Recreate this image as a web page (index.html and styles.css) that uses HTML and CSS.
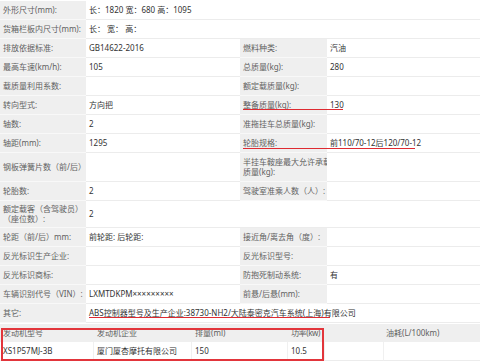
FILE: index.html
```html
<!DOCTYPE html>
<html lang="zh-CN">
<head>
<meta charset="utf-8">
<link rel="stylesheet" href="styles.css">
</head>
<body>
<div class="spec">
  <div class="k">外形尺寸(mm):</div>
  <div class="v span3">长：1820 宽：680 高：1095</div>

  <div class="k">货箱栏板内尺寸(mm):</div>
  <div class="v span3">长： 宽： 高：</div>

  <div class="k">排放依据标准:</div>
  <div class="v">GB14622-2016</div>
  <div class="k">燃料种类:</div>
  <div class="v">汽油</div>

  <div class="k">最高车速(km/h):</div>
  <div class="v">105</div>
  <div class="k">总质量(kg):</div>
  <div class="v">280</div>

  <div class="k">载质量利用系数:</div>
  <div class="v"></div>
  <div class="k">额定载质量(kg):</div>
  <div class="v"></div>

  <div class="k">转向型式:</div>
  <div class="v">方向把</div>
  <div class="k">整备质量(kg):</div>
  <div class="v">130</div>

  <div class="k">轴数:</div>
  <div class="v">2</div>
  <div class="k">准拖挂车总质量(kg):</div>
  <div class="v"></div>

  <div class="k">轴距(mm):</div>
  <div class="v">1295</div>
  <div class="k">轮胎规格:</div>
  <div class="v">前110/70-12后120/70-12</div>

  <div class="k">钢板弹簧片数（前/后）:</div>
  <div class="v"></div>
  <div class="k">半挂车鞍座最大允许承载<br>质量(kg):</div>
  <div class="v"></div>

  <div class="k">轮胎数:</div>
  <div class="v">2</div>
  <div class="k">驾驶室准乘人数（人）:</div>
  <div class="v"></div>

  <div class="k">额定载客（含驾驶员）<br>（座位数）:</div>
  <div class="v span3">2</div>

  <div class="k">轮距（前/后）mm:</div>
  <div class="v">前轮距: 后轮距:</div>
  <div class="k">接近角/离去角（度）:</div>
  <div class="v"></div>

  <div class="k">反光标识生产企业:</div>
  <div class="v"></div>
  <div class="k">反光标识型号:</div>
  <div class="v"></div>

  <div class="k">反光标识商标:</div>
  <div class="v"></div>
  <div class="k">防抱死制动系统:</div>
  <div class="v">有</div>

  <div class="k">车辆识别代号（VIN）:</div>
  <div class="v">LXMTDKPM×××××××××</div>
  <div class="k">前悬/后悬(mm):</div>
  <div class="v"></div>

  <div class="k">其它:</div>
  <div class="v span3">ABS控制器型号及生产企业:38730-NH2/大陆泰密克汽车系统(上海)有限公司</div>

  <span class="mark mark-a"></span>
  <span class="mark mark-b"></span>
  <span class="mark mark-c"></span>
</div>

<div class="engine">
  <div class="eng-head">
    <div class="h">发动机型号</div>
    <div class="h">发动机企业</div>
    <div class="h">排量(ml)</div>
    <div class="h tight">功率(kw)</div>
    <div class="h">油耗(L/100km)</div>
  </div>
  <div class="eng-row">
    <div class="d">XS1P57MJ-3B</div>
    <div class="d">厦门厦杏摩托有限公司</div>
    <div class="d">150</div>
    <div class="d">10.5</div>
    <div class="d"></div>
    <div class="d"></div>
  </div>
  <span class="box"></span>
</div>
</body>
</html>
```

FILE: styles.css
```css
html, body {
  margin: 0;
  padding: 0;
  background: #ffffff;
  overflow: hidden;
}

body {
  width: 480px;
  font-family: "Noto Sans", "Noto Sans CJK SC", sans-serif;
  font-size: 8px;
  line-height: 10px;
  color: #333333;
}

.spec {
  position: relative;
  margin-top: 1px;
  display: grid;
  grid-template-columns: 86px 154px 87px 1fr;
  grid-template-rows: repeat(8, 19px) 29px 19px 27px repeat(5, 19px);
}

.k, .v {
  box-sizing: border-box;
  display: flex;
  align-items: center;
  padding: 0 0 0 3px;
  white-space: nowrap;
}

.k {
  background: #efefef;
  color: #616161;
  border-bottom: 1px solid #f8f8f8;
}

.v {
  background: #ffffff;
  color: #333333;
  border-bottom: 1px solid #ececec;
}

.span3 {
  grid-column: span 3;
}

.mark {
  position: absolute;
  height: 1px;
  background: #de2a31;
}

.mark-a { top: 108px; left: 243px; width: 100px; }
.mark-b { top: 147px; left: 243px; width: 172px; }
.mark-c { top: 316px; left: 89px; width: 241px; }

.engine {
  position: relative;
  margin-top: 1px;
}

.eng-head {
  display: grid;
  grid-template-columns: 94px 98px 96px 95px 1fr;
  height: 18px;
  background: #efefef;
  color: #616161;
}

.eng-row {
  display: grid;
  grid-template-columns: 94px 98px 96px 37px 59px 1fr;
  height: 19px;
}

.h, .d {
  box-sizing: border-box;
  display: flex;
  align-items: center;
  padding: 0 0 0 3px;
  white-space: nowrap;
}

.tight {
  letter-spacing: -0.4px;
}

.d {
  color: #333333;
  border-right: 1px solid #f0f0f0;
  border-bottom: 1px solid #ececec;
}

.d:last-child {
  border-right: none;
}

.box {
  position: absolute;
  left: 1px;
  top: 4px;
  width: 323px;
  height: 33px;
  box-sizing: border-box;
  border: 2px solid #e2353b;
}
```
